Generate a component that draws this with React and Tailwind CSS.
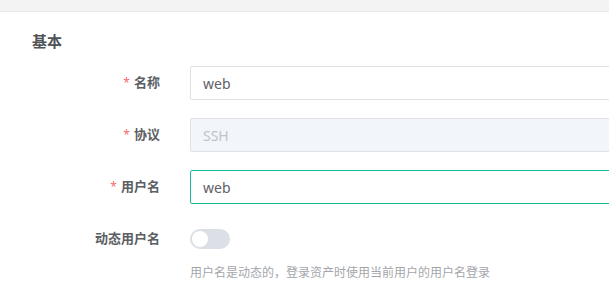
import React, { useState } from 'react';

const font = { fontFamily: '"Noto Sans", "Noto Sans CJK SC", sans-serif' };

const FormRow = ({ label, required, children }) => (
  <div className="flex items-center h-[34px]">
    <label className="w-[190px] shrink-0 pr-[30px] flex justify-end items-center text-[13px] font-bold text-[#5b5e63]">
      {required && <span className="text-[#f56c6c] mr-[4px] text-[12px] font-normal">*</span>}
      {label}
    </label>
    <div className="w-[460px] shrink-0 h-full">{children}</div>
  </div>
);

export default function App() {
  const [dynamic, setDynamic] = useState(false);

  return (
    <div className="w-[609px] h-[301px] bg-white overflow-hidden" style={font}>
      <div className="h-[12px] bg-[#f3f3f3] border-b border-[#e9ebef]" />

      <div className="pt-[18px]">
        <h3 className="pl-[32px] text-[15px] leading-[22px] font-bold text-[#4f5257]">基本</h3>

        <div className="mt-[14px] flex flex-col gap-[18px]">
          <FormRow label="名称" required>
            <input
              readOnly
              value="web"
              className="w-full h-full px-[12px] text-[14px] text-[#5e6166] border border-[#dfe1e6] rounded-[2px] outline-none"
            />
          </FormRow>
          <FormRow label="协议" required>
            <input
              disabled
              value="SSH"
              className="w-full h-full px-[12px] text-[14px] text-[#c0c4cc] bg-[#f2f5f9] border border-[#dfe1e6] rounded-[2px] outline-none"
            />
          </FormRow>
          <FormRow label="用户名" required>
            <input
              readOnly
              value="web"
              className="w-full h-full px-[12px] text-[14px] text-[#5e6166] border border-[#18b99a] rounded-[2px] outline-none"
            />
          </FormRow>
          <div>
            <FormRow label="动态用户名">
              <div className="h-full flex items-center">
                <button
                  onClick={() => setDynamic(!dynamic)}
                  className={`relative w-[40px] h-[20px] rounded-full ${dynamic ? 'bg-[#18b99a]' : 'bg-[#dcdfe6]'}`}
                >
                  <span
                    className={`absolute top-[2px] w-[16px] h-[16px] rounded-full bg-white ${dynamic ? 'left-[22px]' : 'left-[2px]'}`}
                  />
                </button>
              </div>
            </FormRow>
            <p className="pl-[190px] mt-[8px] text-[12px] leading-[18px] text-[#a3a6ab]">
              用户名是动态的，登录资产时使用当前用户的用户名登录
            </p>
          </div>
        </div>
      </div>
    </div>
  );
}
